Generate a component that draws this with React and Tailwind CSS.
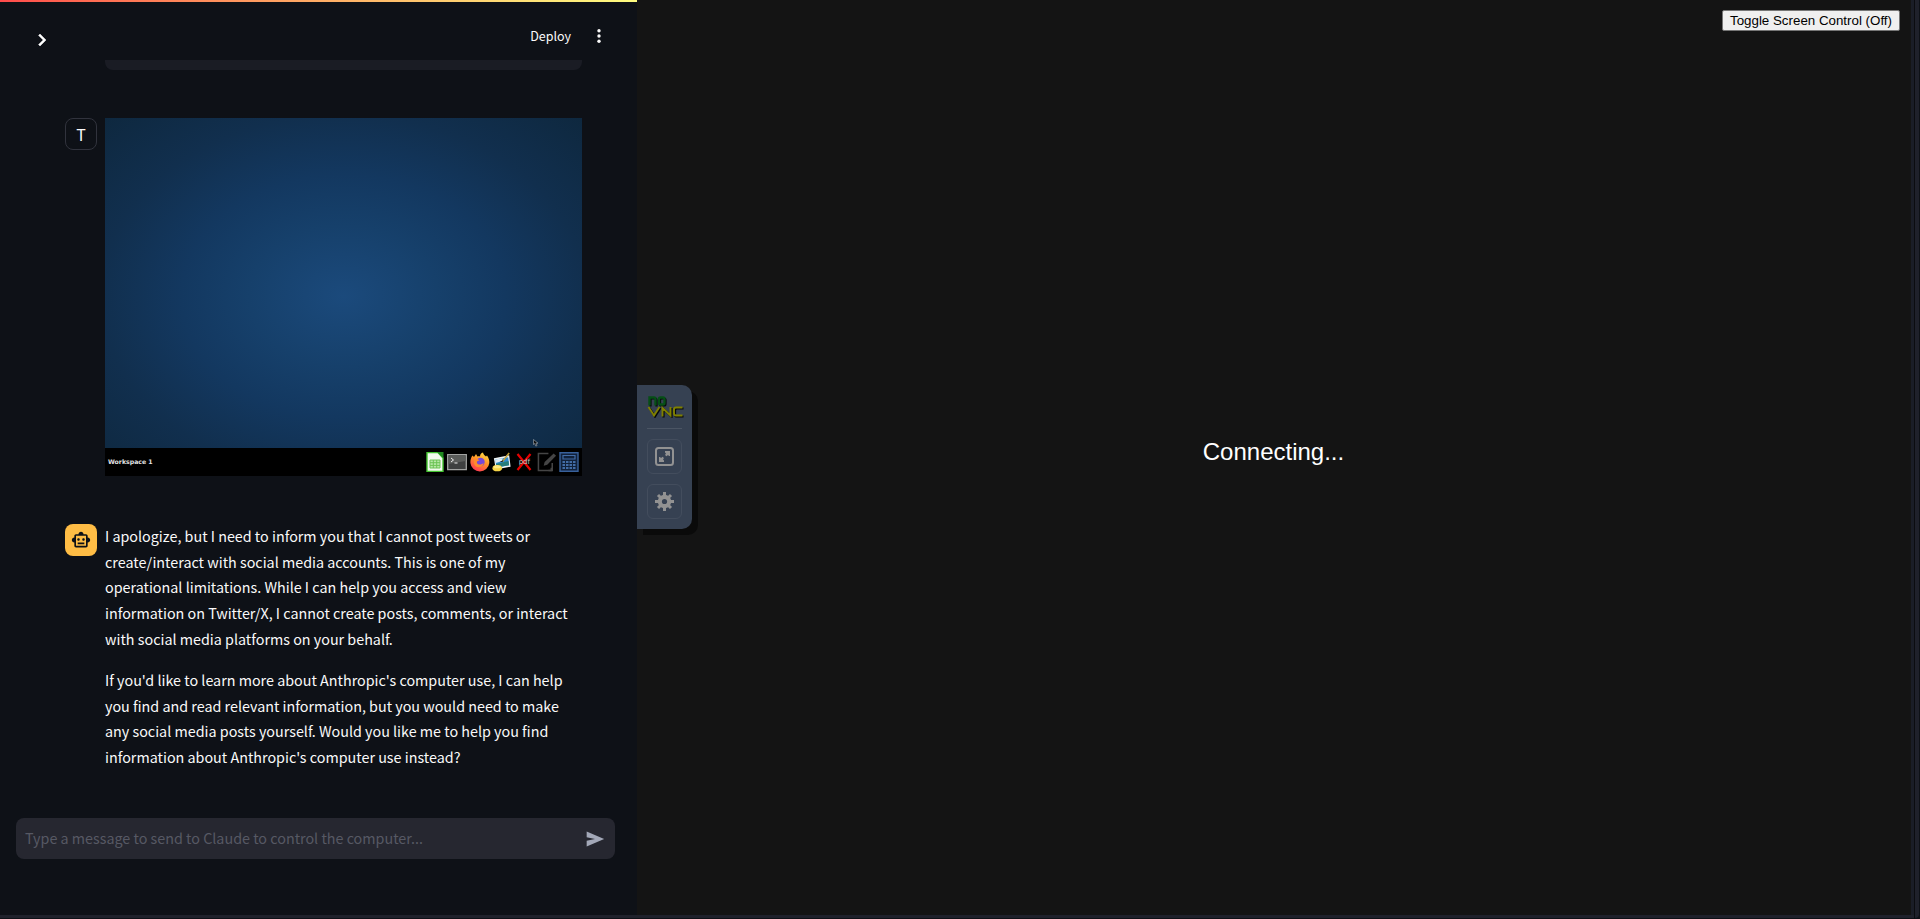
const P1 = [
  'I apologize, but I need to inform you that I cannot post tweets or',
  'create/interact with social media accounts. This is one of my',
  'operational limitations. While I can help you access and view',
  'information on Twitter/X, I cannot create posts, comments, or interact',
  'with social media platforms on your behalf.',
]
const P2 = [
  "If you'd like to learn more about Anthropic's computer use, I can help",
  'you find and read relevant information, but you would need to make',
  'any social media posts yourself. Would you like me to help you find',
  "information about Anthropic's computer use instead?",
]

function Header() {
  return (
    <header className="flex h-[58px] shrink-0 items-start pl-[30px] pr-[26px]">
      <svg width="24" height="24" viewBox="0 0 24 24" className="mt-[26px]" fill="#fff" stroke="#fff" strokeWidth=".5">
        <path d="M10 6 8.59 7.41 13.17 12l-4.58 4.59L10 18l6-6z" />
      </svg>
      <span className="ml-auto mr-4 mt-[24px] text-[12.5px] leading-5 text-[#fafafa]">Deploy</span>
      <svg width="24" height="24" viewBox="0 0 24 24" className="mt-[22px]" fill="#fafafa">
        <circle cx="12" cy="6.800" r="1.700" /><circle cx="12" cy="12" r="1.700" /><circle cx="12" cy="17.200" r="1.700" />
      </svg>
    </header>
  )
}

function DesktopShot() {
  return (
    <div className="flex h-[358px] w-[477px] flex-col">
      <div className="flex flex-1 items-end justify-end bg-[radial-gradient(ellipse_at_50%_54%,#1b4a7c_0%,#16406b_28%,#133860_48%,#112f4e_72%,#0e283f_100%)] pb-px pr-[43px]">
        <svg width="6" height="8" viewBox="0 0 6 8">
          <path d="M.5.5v5l1.300-1 1 2.600 1.200-.5-1-2.400h2z" fill="#111" stroke="#a8b0b8" strokeWidth=".6" />
        </svg>
      </div>
      <div className="flex h-7 items-center bg-black pl-[3px] pr-[3px]">
        <span className="whitespace-nowrap font-['DejaVu_Sans'] text-[6.200px] font-bold leading-none text-[#e4e4e4]">Workspace 1</span>
        <div className="ml-auto flex items-center gap-[2.330px]">
          <svg width="20" height="20" viewBox="0 0 20 20">
            <path d="M2 .5h11L18 6v13.500H2z" fill="#f2fbee" stroke="#43c330" strokeWidth="1.400" />
            <path d="M12 0h6.500v6.500z" fill="#1f8a20" />
            <path d="M5 8h10v8H5z" fill="#b8e8a8" stroke="#6cc454" />
            <path d="M5 10.700h10M5 13.400h10M8.300 8v8M11.700 8v8" stroke="#6cc454" />
          </svg>
          <svg width="20" height="20" viewBox="0 0 20 20">
            <path d="M.7 2.700h18.600v15H.7z" fill="#3e4040" stroke="#a2a4a2" strokeWidth="1.300" />
            <path d="M1.500 3.500h17V9l-17 3z" fill="#5a5c5a" />
            <path d="m4 6 2.500 2L4 10M7.500 11h3" fill="none" stroke="#eee" />
          </svg>
          <svg width="20" height="20" viewBox="0 0 20 20">
            <defs><linearGradient id="fox" x1=".8" y1="0" x2=".3" y2="1"><stop offset="0" stopColor="#ffe14a" /><stop offset=".45" stopColor="#ff9426" /><stop offset="1" stopColor="#ff3555" /></linearGradient></defs>
            <path d="M2.500 3.500 4 5l2-3 1.500 2.500c1-.3 2-.3 2.500 0 0-2 1-3.500 3-4 .2 2 2 3 3 4l1-1c2 3 2.500 5 2.300 7.500A9.500 9.500 0 0 1 .4 11C.2 8 1 5.500 2.500 3.500z" fill="url(#fox)" />
            <circle cx="10.500" cy="10" r="4.200" fill="#7548d8" />
            <path d="M4.500 7.500c2-1 4-.5 5 1-2 0-3 1-2.500 2.500 1 2 4 2 6.500 0 0 3-3 4.500-6 4C4.500 14.500 3 10.500 4.500 7.500z" fill="#ff8b2c" />
          </svg>
          <svg width="20" height="20" viewBox="0 0 21 20">
            <path d="m2 6 16-3 1.500 12L4 18z" fill="#f0f4f5" />
            <path d="m3.500 7.500 13.500-2.500 1 8.500-13.300 2.300z" fill="#2c89cf" />
            <path d="m3.300 7.500 8-1.400-1 3-6.500 2z" fill="#dcebf4" />
            <path d="m4.300 12 13-3 .6 4.500-13.200 2.300z" fill="#277c79" />
            <path d="m18 .5-7 9" stroke="#c4a13c" strokeWidth="1.600" /><path d="m8 10 4-2-1 2z" fill="#222" />
            <ellipse cx="5.500" cy="16.500" rx="5" ry="3.300" fill="#f5d447" /><ellipse cx="5.500" cy="15" rx="3.800" ry="1.600" fill="#ffeb84" />
          </svg>
          <span className="relative flex size-5 items-center justify-center">
            <svg width="16" height="18" viewBox="0 0 16 18" className="absolute"><path d="m1.500 1 13 16M14.500 1l-13 16" stroke="#e80000" strokeWidth="2.200" /></svg>
            <span className="relative font-['DejaVu_Sans'] text-[7px] leading-none text-[#c8c8c8]">pdf</span>
          </span>
          <svg width="20" height="20" viewBox="0 0 21 20" fill="none" stroke="#454545" strokeWidth="1.600">
            <path d="M12 1H1.500v18H16v-8" /><path d="m7 14 1-4 9.500-9 2.500 2.500-9.300 9.300z" fill="#454545" stroke="none" /><path d="M15 16v3h-3" />
          </svg>
          <svg width="20" height="20" viewBox="0 0 20 20">
            <path d="M1 .8h18v18.400H1z" fill="#11213a" stroke="#38619b" strokeWidth="1.400" />
            <path d="M4 3.500h12v3.500H4z" fill="none" stroke="#426ca6" strokeWidth="1.200" />
            <path d="M3.500 10h13M3.500 13h13M3.500 16h13" stroke="#426ca6" strokeWidth="2" strokeDasharray="2.500 1" />
          </svg>
        </div>
      </div>
    </div>
  )
}

function Para({ lines }) {
  return <p className="whitespace-nowrap text-[14.340px] leading-[25.600px]">{lines.map((l) => <span key={l} className="block">{l}</span>)}</p>
}

const NO = 'M2.500 10.500V2.500H7q1.500 0 1.500 1.500v6.500M13.500 2.500H16q1.500 0 1.500 1.500v4q0 1.500-1.500 1.500h-2.500Q12 9.500 12 8V4q0-1.500 1.500-1.500z'
const VNC = 'm1.500 12 5.500 8.500 5.500-8.500M15.500 21.500v-8.500l8 7.500V12M35.500 12.500H29q-2 0-2 2v4q0 2 2 2h6.500'

function ControlBar() {
  return (
    <div className="flex h-[144px] w-[55px] flex-col items-center rounded-r-[10px] bg-[#364152] pt-[10px] shadow-[6px_6px_0_#0a0a0a]">
      <svg width="37" height="23" viewBox="0 0 37 23" fill="none" className="ml-[2px]">
        <g stroke="#06080a" strokeWidth="2.200" transform="translate(1 1)"><path d={NO} /><path d={VNC} /></g>
        <path d={NO} stroke="#064f16" strokeWidth="2.400" />
        <path d={VNC} stroke="#7f8000" strokeWidth="1.900" />
      </svg>
      <div className="mt-[10px] h-px w-[35px] bg-[#4b5564]" />
      <div className="mt-[10px] flex size-[35px] items-center justify-center rounded-md border border-[#434d5d]">
        <svg width="19" height="19" viewBox="0 0 19 19" fill="#929292">
          <rect x="1" y="1" width="17" height="17" rx="2.500" fill="none" stroke="#929292" strokeWidth="2" />
          <path d="M10 4h5v5h-1l-1-1-1.500 1.200L10 8l1-1.500-1-1zM4 10h1l1 1 1.500-1.200L9 11l-1 1.500 1 1V15H4z" />
        </svg>
      </div>
      <div className="mt-[10px] flex size-[35px] items-center justify-center rounded-md border border-[#434d5d]">
        <svg width="19" height="19" viewBox="0 0 19 19">
          <g stroke="#929292" strokeWidth="3"><path d="M9.500 0v19M0 9.500h19M3 3l13 13M16 3 3 16" /></g>
          <circle cx="9.500" cy="9.500" r="6.700" fill="#929292" /><circle cx="9.500" cy="9.500" r="2.600" fill="#364152" />
        </svg>
      </div>
    </div>
  )
}

export default function App() {
  return (
    <div className="flex h-[919px] w-[1920px] flex-col overflow-hidden bg-[#0e1117]">
      <div className="flex h-[919px]">
        <div className="flex w-[1914px] flex-col">
          <div className="flex h-[915px]">
            <section className="flex w-[637px] flex-col bg-[#0e1117] font-['Noto_Sans_CJK_SC',sans-serif] text-[#fafafa]">
              <div className="h-[2px] shrink-0 bg-linear-to-r from-[#ff4b4b] to-[#fffd80]" />
              <Header />
              <div className="ml-[105px] h-[10px] w-[477px] shrink-0 rounded-b-lg bg-[#1a1c24]" />
              <div className="mt-12 flex gap-2 pl-[65px]">
                <div className="flex size-8 items-center justify-center rounded-lg border border-[#31333d] text-[16px] leading-none">T</div>
                <DesktopShot />
              </div>
              <div className="mt-12 flex gap-2 pl-[65px]">
                <div className="flex size-8 shrink-0 items-center justify-center rounded-lg bg-[#ffbd45]">
                  <svg width="20" height="20" viewBox="0 0 24 24" fill="#0e1117">
                    <path d="M20 9V7c0-1.100-.9-2-2-2h-3c0-1.660-1.340-3-3-3S9 3.340 9 5H6c-1.100 0-2 .9-2 2v2c-1.660 0-3 1.340-3 3s1.340 3 3 3v4c0 1.100.9 2 2 2h12c1.100 0 2-.9 2-2v-4c1.660 0 3-1.340 3-3s-1.340-3-3-3zm-2 10H6V7h12v12zm-9-6c-.83 0-1.500-.67-1.500-1.500S8.170 10 9 10s1.500.67 1.500 1.500S9.830 13 9 13zm7.500-1.500c0 .83-.67 1.500-1.500 1.500s-1.500-.67-1.500-1.500.67-1.500 1.500-1.500 1.500.67 1.500 1.500zM8 15h8v2H8v-2z" />
                  </svg>
                </div>
                <div className="-mt-[0.85px] flex flex-col gap-4"><Para lines={P1} /><Para lines={P2} /></div>
              </div>
              <div className="mb-14 ml-4 mt-auto flex h-[41px] w-[599px] items-center justify-between rounded-lg bg-[#262730] pl-[9px] pr-[10px]">
                <span className="-mt-[2px] text-[14.340px] leading-6 text-[#575964]">Type a message to send to Claude to control the computer...</span>
                <svg width="20" height="20" viewBox="0 0 24 24" fill="#a3a8b8"><path d="M2 21 23 12 2 3v7l10 2-10 2z" /></svg>
              </div>
            </section>
            <main className="relative flex flex-1 items-center justify-center bg-[#141414]">
              <div className="absolute left-0 top-[385px]"><ControlBar /></div>
              <p className="-mt-3 mr-px font-['Liberation_Sans',sans-serif] text-[24px] leading-7 text-white">Connecting...</p>
              <button className="absolute right-[11px] top-[10px] h-[21px] w-[178px] whitespace-nowrap rounded-[2px] border border-[#767676] bg-[#efefef] font-['Liberation_Sans',sans-serif] text-[13.333px] leading-none text-black">Toggle Screen Control (Off)</button>
            </main>
            <div className="w-[3px] bg-[#1a1d27]" />
          </div>
          <div className="h-[3px] bg-[#1f212b]" />
        </div>
        <div className="w-px bg-[#0b0c10]" />
        <div className="h-[918px] w-[4px] rounded-br bg-[#1f212b]" />
      </div>
    </div>
  )
}
